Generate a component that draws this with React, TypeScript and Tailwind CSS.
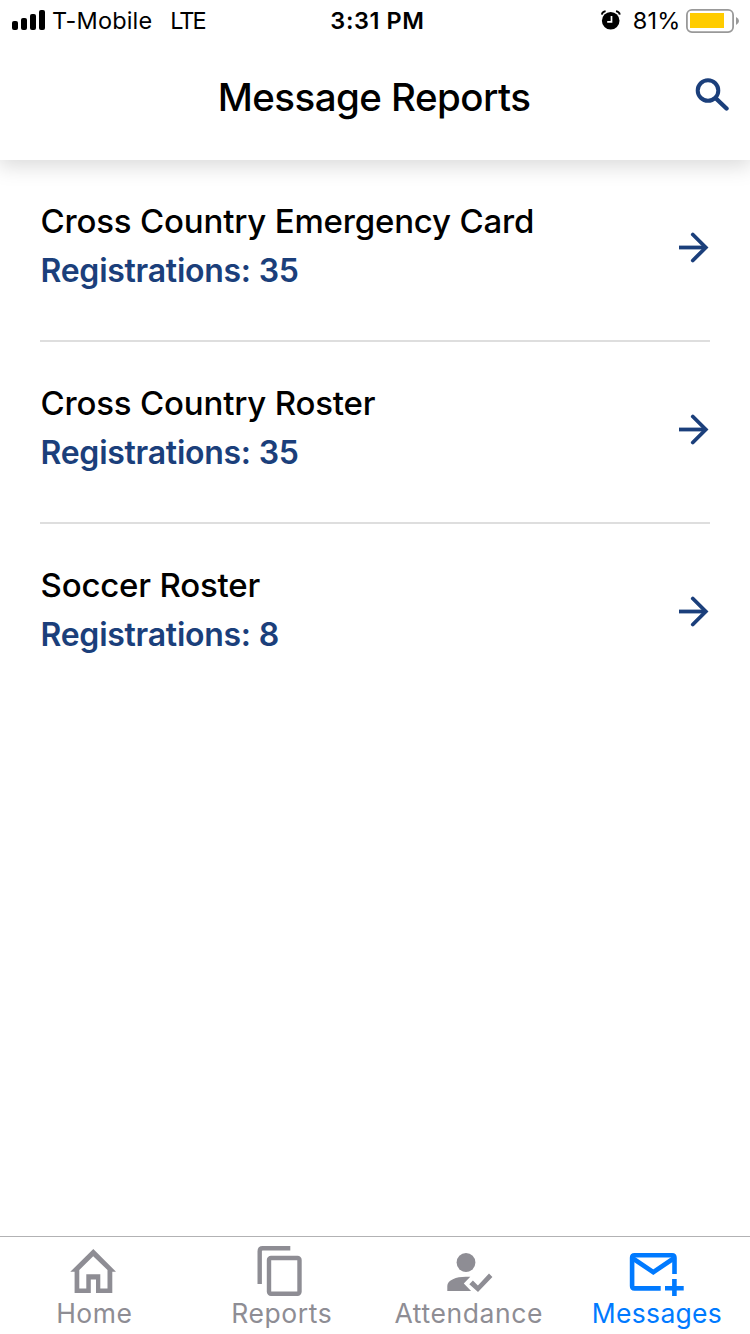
import type { ReactNode } from 'react';

interface Report {
  id: number;
  name: string;
  registrations: number;
}

interface TabProps {
  label: string;
  tracking: string;
  active?: boolean;
  children: ReactNode;
}

const reports: Report[] = [
  { id: 1, name: 'Cross Country Emergency Card', registrations: 35 },
  { id: 2, name: 'Cross Country Roster', registrations: 35 },
  { id: 3, name: 'Soccer Roster', registrations: 8 },
];

function StatusBar() {
  return (
    <div className="grid h-[42px] grid-cols-3 items-center pl-3 pr-[11px] text-[23.5px] leading-none">
      <div className="flex items-center whitespace-nowrap">
        <svg width="33" height="20" viewBox="0 0 33 20" fill="currentColor" className="mr-[7px] -mt-0.5">
          <rect x="0" y="11" width="6" height="9" rx="2" />
          <rect x="9" y="8" width="6" height="12" rx="2" />
          <rect x="18" y="4" width="6" height="16" rx="2" />
          <rect x="27" y="0" width="6" height="20" rx="2" />
        </svg>
        <span className="tracking-[0.15px]">T-Mobile</span>
        <span className="ml-[18px] tracking-[-2px]">LTE</span>
      </div>
      <div className="pl-1 text-center font-semibold tracking-[0.6px]">3:31 PM</div>
      <div className="flex items-center justify-end">
        <svg width="20" height="20" viewBox="0 0 20 20" className="mr-3 -mt-0.5">
          <circle cx="9.7" cy="10.7" r="8.8" fill="#000" />
          <path d="M.8 4.6Q1.2 1.8 4.6 1.2M18.800 4.6Q18.400 1.8 15 1.2" fill="none" stroke="#000" strokeWidth="1.8" />
          <path d="M10.5 6v5.8H6.2" fill="none" stroke="#fff" strokeWidth="1.7" />
        </svg>
        <span className="tracking-[0.2px]">81%</span>
        <svg width="53" height="24" viewBox="0 0 53 24" className="ml-[5.5px] -mt-px">
          <rect x="0.9" y="0.9" width="46.2" height="22.2" rx="5" fill="none" stroke="#999" strokeWidth="1.8" />
          <rect x="4" y="4" width="34" height="15" fill="#ffcc00" />
          <path d="M50 8q3 1.500 3 4t-3 4z" fill="#999" />
        </svg>
      </div>
    </div>
  );
}

function Header() {
  return (
    <header className="h-40 bg-white shadow-[0_4px_20px_2px_rgba(0,0,0,0.15)]">
      <StatusBar />
      <div className="grid h-[118px] grid-cols-[80px_1fr_80px] items-center pb-2">
        <h1 className="col-start-2 pr-0.5 text-center text-[38.5px] font-medium leading-none tracking-[-0.55px]">
          Message Reports
        </h1>
        <svg width="34" height="34" viewBox="0 0 34 34" fill="none" stroke="#1b3f7b" className="-mt-1 ml-[25px]">
          <circle cx="13" cy="12.5" r="10.3" strokeWidth="4" />
          <path d="M21 20.500l10.500 10" strokeWidth="4.4" strokeLinecap="round" />
        </svg>
      </div>
    </header>
  );
}

function ReportRow({ report }: { report: Report }) {
  return (
    <li className="flex h-[182px] justify-between border-b-2 border-[#dedede] last:border-transparent">
      <div className="pl-[0.5px] pt-[37px]">
        <div className="text-[33px] font-medium leading-[49px] tracking-[-0.18px]">{report.name}</div>
        <div className="text-[32px] font-semibold leading-[50px] tracking-[-0.26px] text-[#1b3f7b]">
          Registrations: {report.registrations}
        </div>
      </div>
      <svg width="31" height="31" viewBox="0 0 31 31" fill="none" stroke="#1b3f7b" strokeWidth="3.8" className="mt-[72px]">
        <path d="M0 15.500h27" />
        <path d="M13.800 2.500l13 13-13 13" strokeLinecap="round" />
      </svg>
    </li>
  );
}

function Tab({ label, tracking, active = false, children }: TabProps) {
  return (
    <div className={`flex flex-col items-center pt-1 ${active ? 'text-[#007aff]' : 'text-[#8e8d94]'}`}>
      <svg width="60" height="58" viewBox="0 0 60 58" fill="none" stroke="currentColor">
        {children}
      </svg>
      <span className={`text-[26.5px] leading-7 ${tracking}`}>{label}</span>
    </div>
  );
}

function TabBar() {
  return (
    <nav className="grid h-[98px] grid-cols-4 border-t border-[#b2b2b4]">
      <Tab label="Home" tracking="pl-px tracking-[0.5px]">
        <path
          d="M29.300 8L52 30.800H48.300V52H32V38.500h-5.200V52H10.600V30.800H6.300zM29.200 15.200L15.300 29.100V47.500H22.300V33.300H36.300V47.500H43.500V29.100z"
          fill="currentColor"
          fillRule="evenodd"
          stroke="none"
        />
      </Tab>
      <Tab label="Reports" tracking="pl-px tracking-[0.6px]">
        <g strokeWidth="4.4">
          <path d="M8.700 43V10.200q0-3 3-3H39.300" />
          <rect x="18" y="17" width="30.5" height="35.7" rx="2" />
        </g>
      </Tab>
      <Tab label="Attendance" tracking="tracking-[0.6px]">
        <g fill="currentColor" stroke="none">
          <circle cx="27" cy="21.5" r="9.4" />
          <path d="M8.300 50v-5c0-6 9-9.300 18.500-9.300h4.500l-6.500 6.700 7.300 7.600z" />
          <path d="M30.300 43.200l3.600-3.600 5 5L50 32.500l3.400 3.500L39 51z" />
        </g>
      </Tab>
      <Tab label="Messages" tracking="pl-[1.5px] tracking-[0.3px]" active>
        <g strokeWidth="4.6">
          <path d="M34.700 47.400H8.500q-2.400 0-2.400-2.400V16.700q0-2.400 2.400-2.400H46.100q2.400 0 2.400 2.400V33" />
          <path d="M7 17.500L27.300 31.200 47.500 17.500" />
          <path d="M39 47.300h18.700M48.400 38v17" />
        </g>
      </Tab>
    </nav>
  );
}

export default function App() {
  return (
    <div className="flex h-[1334px] w-[750px] flex-col overflow-hidden bg-white font-['Inter',sans-serif] text-black">
      <Header />
      <ul className="flex-1 px-10">
        {reports.map((report) => (
          <ReportRow key={report.id} report={report} />
        ))}
      </ul>
      <TabBar />
    </div>
  );
}
